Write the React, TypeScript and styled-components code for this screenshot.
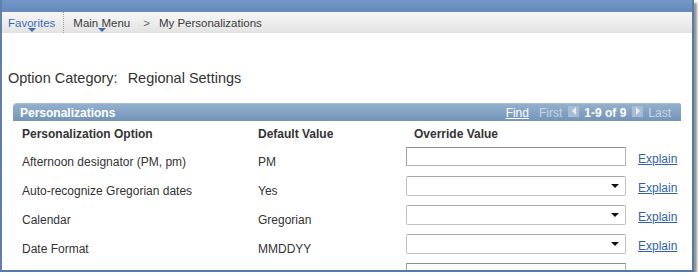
import React from 'react';
import styled, { createGlobalStyle } from 'styled-components';

const GlobalStyle = createGlobalStyle`
  html, body {
    margin: 0;
    padding: 0;
    background: #fff;
  }
  body {
    font-family: "Liberation Sans", Arial, sans-serif;
    color: #333;
  }
`;

const Frame = styled.div`
  width: 690px;
  height: 270px;
  border-left: 2px solid #5f7fae;
  border-right: 2px solid #5679ab;
  border-bottom: 2px solid #5679ab;
  box-shadow: 3px 3px 2px rgba(60, 60, 60, 0.55);
  overflow: hidden;
  background: #fff;
`;

const TopBar = styled.div`
  height: 12px;
  background: linear-gradient(to bottom, #7397c8, #6689bb);
`;

const Crumbs = styled.div`
  height: 21px;
  display: flex;
  align-items: stretch;
  padding-left: 6px;
  background: linear-gradient(to bottom, #f6f6f6, #e3e3e3);
  font-size: 11.5px;
`;

const Crumb = styled.span<{ $menu?: boolean; $blue?: boolean }>`
  position: relative;
  display: flex;
  align-items: center;
  padding-top: 1px;
  color: ${p => (p.$blue ? '#3e6cae' : '#3a3a3a')};

  ${p =>
    p.$menu &&
    `
    &::after {
      content: '';
      position: absolute;
      left: 50%;
      bottom: 1px;
      margin-left: -4px;
      border-left: 4px solid transparent;
      border-right: 4px solid transparent;
      border-top: 4px solid #3f6db0;
    }
  `}
`;

const Divider = styled.span`
  border-left: 1px dotted #a0a0a0;
  margin: 0 9px 0 8px;
`;

const Arrow = styled.span`
  display: flex;
  align-items: center;
  color: #666;
  margin: 0 9px 0 13px;
`;

const Category = styled.div`
  margin: 37px 0 0 6px;
  font-size: 14.5px;
  color: #333;
  line-height: 17px;

  span {
    margin-left: 10px;
  }
`;

const Grid = styled.div`
  margin: 16px 0 0 11px;
  width: 668px;
`;

const GridBar = styled.div`
  height: 18px;
  display: flex;
  align-items: center;
  padding: 0 4px 0 7px;
  border-top-left-radius: 4px;
  border-top-right-radius: 2px;
  background: linear-gradient(to bottom, #93b0cc, #7394b9);
  border-top: 1px solid #a9bfd5;
  box-sizing: border-box;
  font-size: 12px;
  color: #fff;
`;

const BarTitle = styled.span`
  font-weight: bold;
  flex: 1;
`;

const Nav = styled.span<{ $dim?: boolean; $link?: boolean; $bold?: boolean }>`
  color: ${p => (p.$dim ? '#c9d5e2' : '#fff')};
  text-decoration: ${p => (p.$link ? 'underline' : 'none')};
  font-weight: ${p => (p.$bold ? 'bold' : 'normal')};
  margin-right: ${p => (p.$link ? 10 : 6)}px;
`;

const NavButton = styled.span<{ $dir: 'left' | 'right' }>`
  width: 11px;
  height: 11px;
  margin: -3px 5px 0 0;
  background: #a9bdd2;
  display: flex;
  align-items: center;
  justify-content: center;

  &::before {
    content: '';
    border-top: 4px solid transparent;
    border-bottom: 4px solid transparent;
    ${p =>
      p.$dir === 'left'
        ? 'border-right: 4px solid #e6edf4;'
        : 'border-left: 4px solid #e6edf4;'}
  }
`;

const Row = styled.div<{ $h: number }>`
  display: grid;
  grid-template-columns: 236px 148px 232px 1fr;
  padding-left: 9px;
  height: ${p => p.$h}px;
  font-size: 12px;
  line-height: 14px;
`;

const Head = styled.div<{ $indent?: number }>`
  font-weight: bold;
  color: #333;
  padding-top: 6px;
  padding-left: ${p => p.$indent || 0}px;
`;

const Cell = styled.div`
  padding-top: 12px;
  color: #333;
`;

const FieldCell = styled.div`
  padding-top: 4px;
`;

const TextBox = styled.div`
  width: 220px;
  height: 19px;
  box-sizing: border-box;
  border: 1px solid #b4b4b4;
  border-top-color: #8e8e8e;
  border-left-color: #a2a2a2;
  background: #fff;
`;

const SelectBox = styled.div`
  width: 220px;
  height: 20px;
  box-sizing: border-box;
  border: 1px solid #c2c2c2;
  border-top-color: #a8a8a8;
  border-radius: 2px;
  background: #fff;
  display: flex;
  align-items: center;
  justify-content: flex-end;
  padding-right: 6px;

  &::after {
    content: '';
    border-left: 4px solid transparent;
    border-right: 4px solid transparent;
    border-top: 4px solid #111;
  }
`;

const Explain = styled.a`
  display: block;
  padding-top: 9px;
  color: #2f63a8;
  text-decoration: underline;
  font-size: 12px;
`;

const rows = [
  { option: 'Afternoon designator (PM, pm)', def: 'PM', select: false },
  { option: 'Auto-recognize Gregorian dates', def: 'Yes', select: true },
  { option: 'Calendar', def: 'Gregorian', select: true },
  { option: 'Date Format', def: 'MMDDYY', select: true },
  { option: '', def: '', select: false },
];

const App = () => {
  return (
    <>
      <GlobalStyle />
      <Frame>
        <TopBar />
        <Crumbs>
          <Crumb $blue $menu>Favorites</Crumb>
          <Divider />
          <Crumb $menu>Main Menu</Crumb>
          <Arrow>&gt;</Arrow>
          <Crumb>My Personalizations</Crumb>
        </Crumbs>
        <Category>
          Option Category:<span>Regional Settings</span>
        </Category>
        <Grid>
          <GridBar>
            <BarTitle>Personalizations</BarTitle>
            <Nav $link>Find</Nav>
            <Nav $dim>First</Nav>
            <NavButton $dir="left" />
            <Nav $bold>1-9 of 9</Nav>
            <NavButton $dir="right" />
            <Nav $dim>Last</Nav>
          </GridBar>
          <Row $h={22}>
            <Head>Personalization Option</Head>
            <Head>Default Value</Head>
            <Head $indent={8}>Override Value</Head>
            <div />
          </Row>
          {rows.map((r, index) => (
            <Row $h={29} key={index}>
              <Cell>{r.option}</Cell>
              <Cell>{r.def}</Cell>
              <FieldCell>{r.select ? <SelectBox /> : <TextBox />}</FieldCell>
              <Explain href="#">Explain</Explain>
            </Row>
          ))}
        </Grid>
      </Frame>
    </>
  );
};

export default App;
